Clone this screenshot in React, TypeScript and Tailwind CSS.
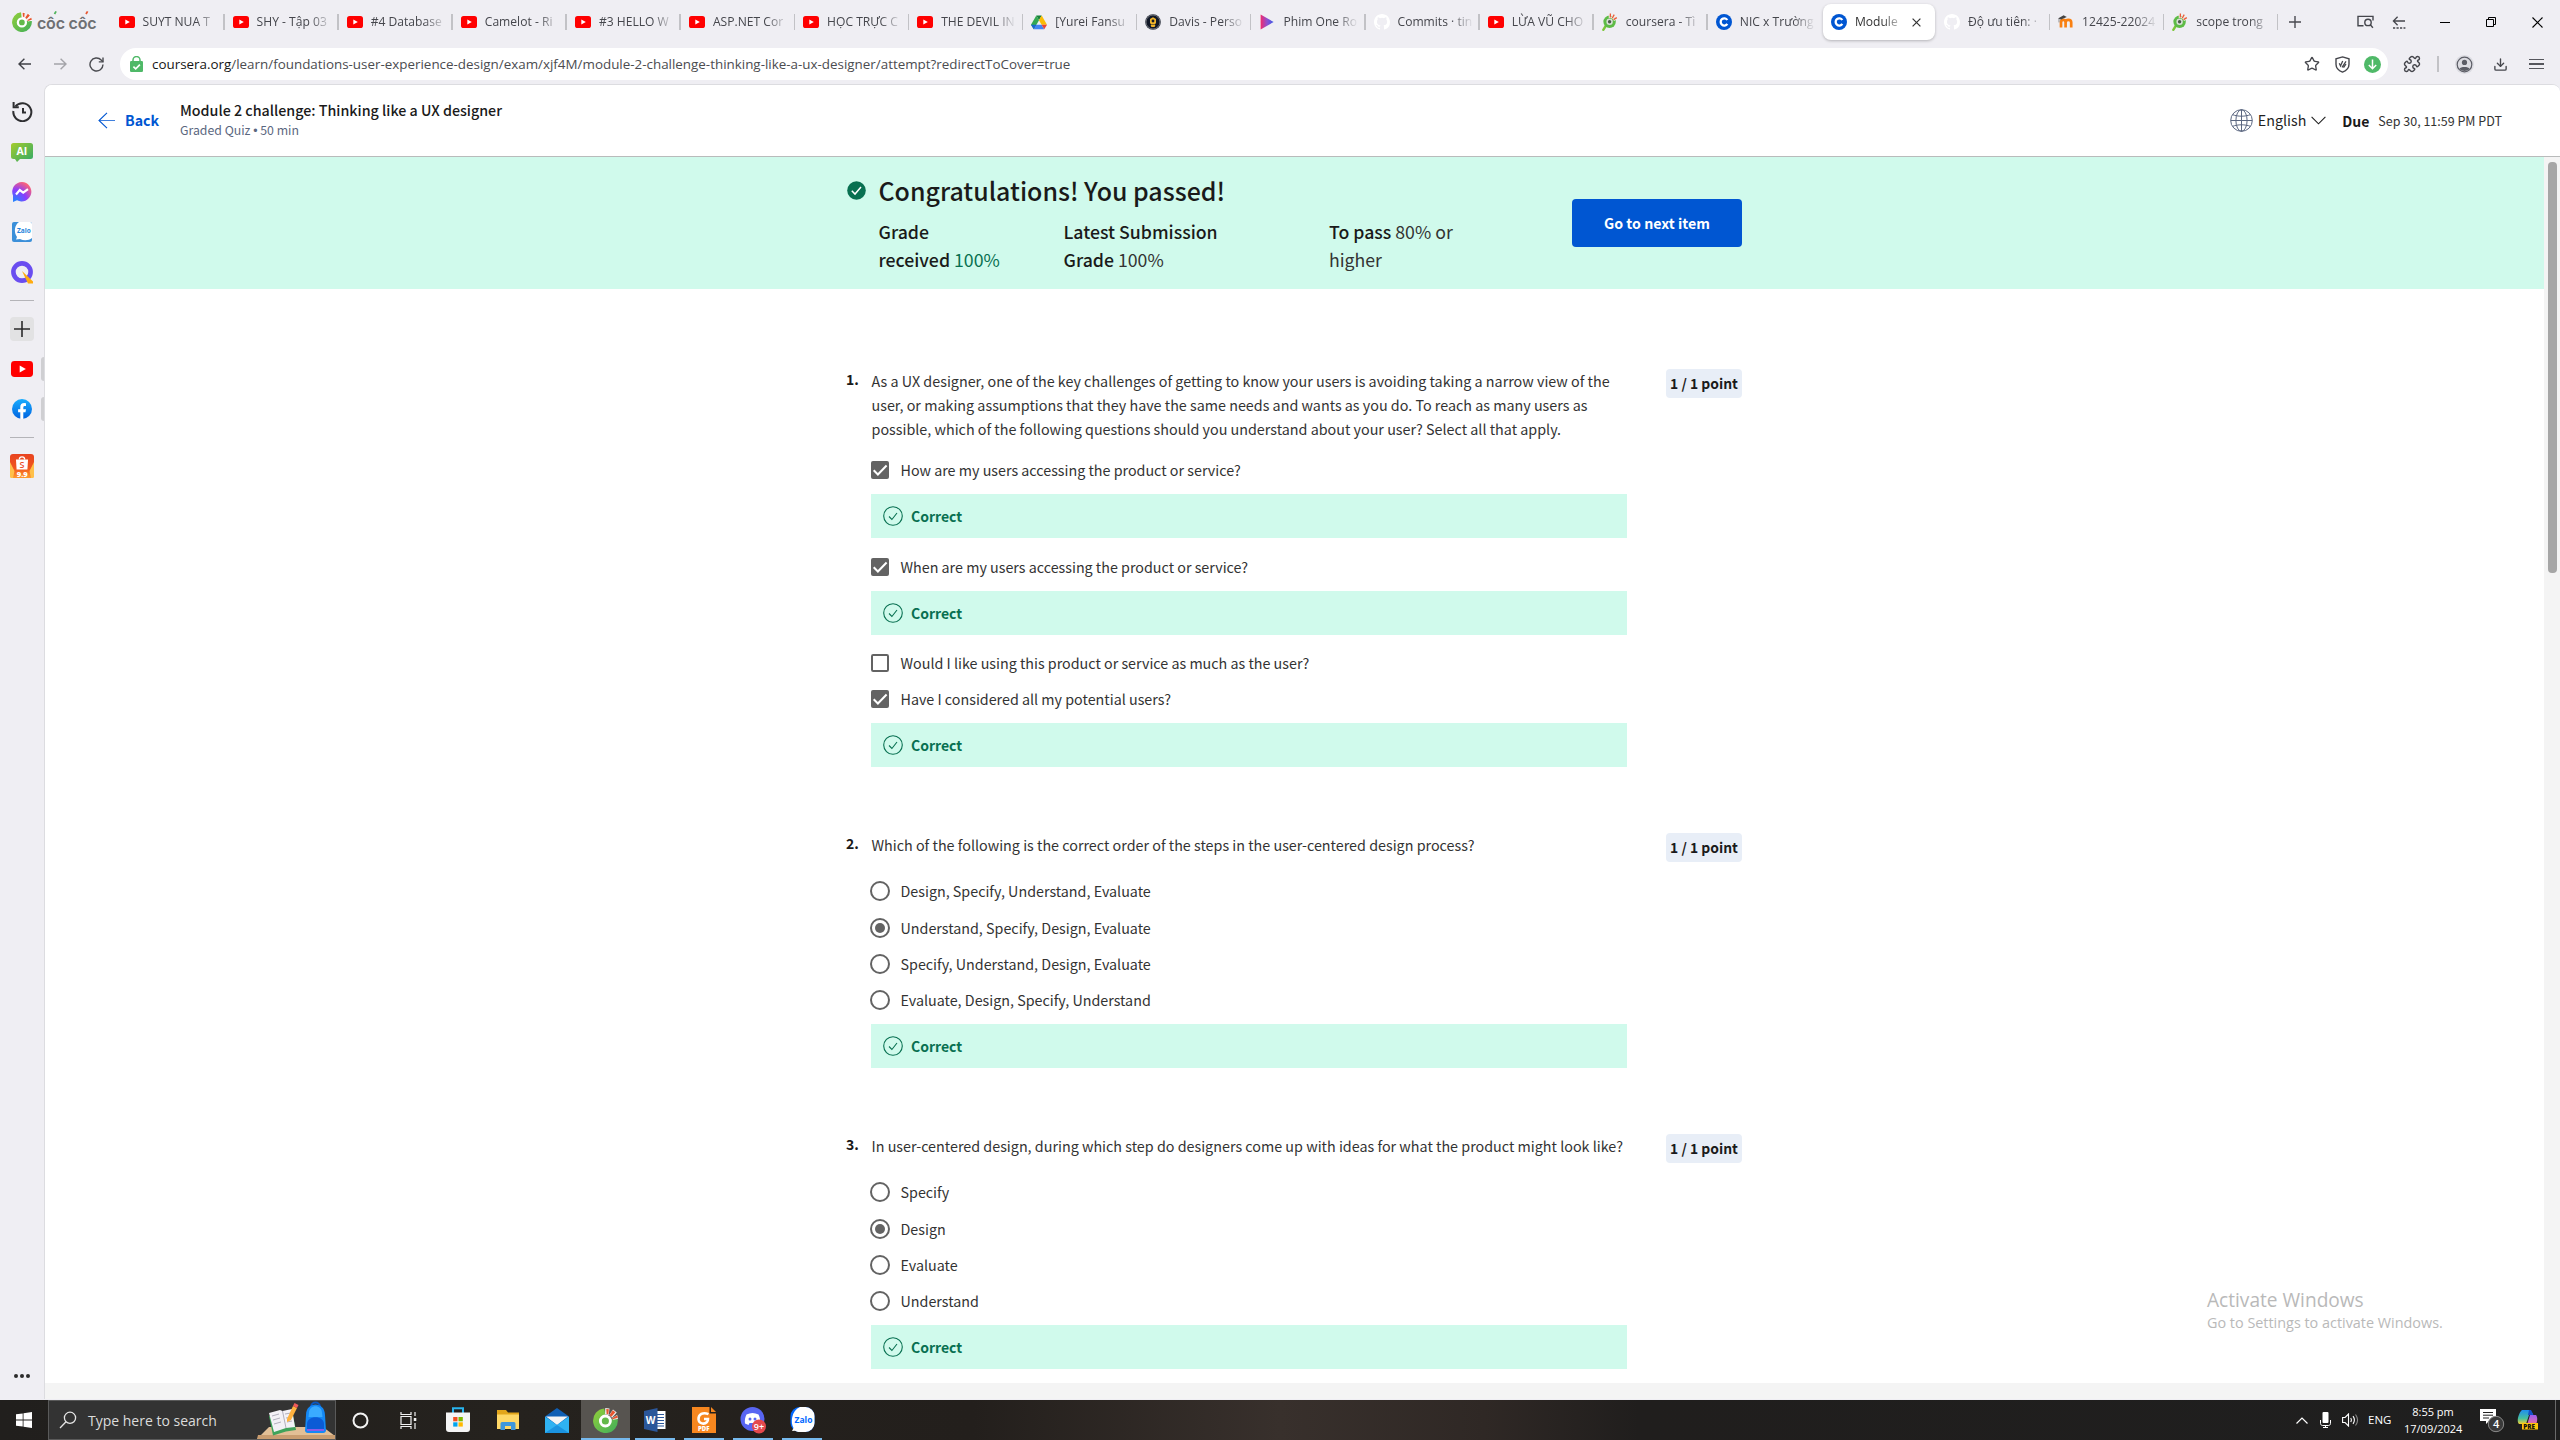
import React from 'react';
import { Download, Puzzle, Star } from 'lucide-react';

const segoe = 'font-["Open_Sans",sans-serif]';
const source = 'font-["Noto_Sans_CJK_SC",sans-serif]';

/* ---------- brand icons ---------- */

function YouTube({ w = 16, h = 12 }: { w?: number; h?: number }) {
  return (
    <svg width={w} height={h} viewBox="0 0 16 12" className="shrink-0" preserveAspectRatio="none">
      <rect width="16" height="12" rx="2.6" fill="#f00" />
      <path d="M6.3 3.4v5.2L10.8 6z" fill="#fff" />
    </svg>
  );
}

function CocCocMark({ size = 20 }: { size?: number }) {
  return (
    <svg width={size} height={size} viewBox="0 0 20 20" className="shrink-0">
      <defs>
        <linearGradient id="ccg" x1="0" y1="0" x2="1" y2="1">
          <stop offset="0" stopColor="#93cf3a" />
          <stop offset="1" stopColor="#3fae5a" />
        </linearGradient>
      </defs>
      <path d="M9 .3A9.900 9.900 0 1 0 19.800 9L14 9 10 6z" fill="url(#ccg)" />
      <circle cx="9.900" cy="10.400" r="4" fill="#63b94a" stroke="#fff" strokeWidth="2.300" />
      <path d="M9.600 5 9.800 0l3.400.3-.6 5.200zM13 5.600 16 1.200l3 2.400-3.800 4.200zM15.500 8l3.800-2.600.7 3.400-4 .6z" fill="#fff" fillOpacity=".9" />
      <path d="M10.900 4.800 10.600.7l2.100.2-.4 4zM13.200 5.800 15.800 1.700l2.100 1.700-3.200 3.600zM15.300 8.100l4-2.300.5 1.900-4 1.300z" fill="#e8552f" />
    </svg>
  );
}

function CocCocSearch() {
  return (
    <svg width="16" height="18" viewBox="0 0 16 18" className="shrink-0">
      <path d="M1.300 16.800 4 12.500" stroke="#7cc63a" strokeWidth="2.400" strokeLinecap="round" />
      <circle cx="7.600" cy="8.800" r="6.200" fill="#5dbb46" />
      <circle cx="7.600" cy="8.800" r="3.200" fill="#d9dfd8" />
      <circle cx="7.600" cy="8.800" r="1.700" fill="#4d5a4b" />
      <path d="m8 5 .2-4.400M10 5.600 12.400 1.600M11.400 7 15 4.600" stroke="#f0efe9" strokeWidth="2.600" />
      <path d="m8.300 4.600.1-4M10.200 5.200 12.200 1.600M11.600 6.600 14.800 4.600" stroke="#ea5b3a" strokeWidth="1.300" />
    </svg>
  );
}

function Drive() {
  return (
    <svg width="16" height="15" viewBox="0 0 16 15" className="shrink-0">
      <path d="M5.300.6h5.400L8 5.200z" fill="#188038" />
      <path d="M5.300.6 8 5.200 2.800 14.200 0 9.800z" fill="#34a853" />
      <path d="M10.700.6 16 9.800h-5.400L8 5.200z" fill="#fbbc04" />
      <path d="M5.400 9.800h5.200l2.600 4.400H2.800z" fill="#4285f4" />
      <path d="M10.600 9.800H16l-2.800 4.400z" fill="#ea4335" />
      <path d="M0 9.800h5.400l-2.600 4.400z" fill="#1967d2" />
    </svg>
  );
}

function Davis() {
  return (
    <svg width="16" height="16" viewBox="0 0 16 16" className="shrink-0">
      <circle cx="8" cy="8" r="7.800" fill="#111827" />
      <circle cx="8" cy="8" r="7" fill="none" stroke="#cfcfcf" strokeWidth=".5" />
      <path d="M8 3.200 11 5v4L9.800 10.400h-3.600L5 9V5z" fill="#f0b429" />
      <path d="M5.600 11h4.800l-.8 2H6.400z" fill="#f0b429" />
      <circle cx="8" cy="7" r="1.400" fill="#111827" />
    </svg>
  );
}

function PlayTriangle() {
  return (
    <svg width="16" height="16" viewBox="0 0 16 16" className="shrink-0">
      <defs>
        <linearGradient id="ptg" x1="0" x2="1">
          <stop offset="0" stopColor="#f2296b" />
          <stop offset=".5" stopColor="#8f4fd0" />
          <stop offset="1" stopColor="#3a5be8" />
        </linearGradient>
      </defs>
      <path d="M1.600.6 14.600 8 1.600 15.400z" fill="url(#ptg)" />
    </svg>
  );
}

function GitHub() {
  return (
    <svg width="16" height="16" viewBox="0 0 16 16" className="shrink-0" fill="#fff">
      <path d="M8 0C3.58 0 0 3.58 0 8c0 3.54 2.29 6.53 5.47 7.59.4.07.55-.17.55-.38v-1.49c-2.01.37-2.53-.49-2.69-.94-.09-.23-.48-.94-.82-1.13-.28-.15-.68-.52-.01-.53.63-.01 1.08.58 1.23.82.72 1.21 1.87.87 2.33.66.07-.52.28-.87.51-1.07-1.78-.2-3.64-.89-3.64-3.95 0-.87.31-1.59.82-2.15-.08-.2-.36-1.02.08-2.12 0 0 .67-.21 2.2.82a7.4 7.4 0 0 1 4 0c1.53-1.04 2.2-.82 2.2-.82.44 1.1.16 1.92.08 2.12.51.56.82 1.27.82 2.15 0 3.07-1.87 3.75-3.65 3.95.29.25.54.73.54 1.48v2.2c0 .21.15.46.55.38A8.01 8.01 0 0 0 16 8c0-4.42-3.58-8-8-8z" />
    </svg>
  );
}

function Coursera() {
  return (
    <svg width="16" height="16" viewBox="0 0 16 16" className="shrink-0">
      <circle cx="8" cy="8" r="8" fill="#0056d2" />
      <path d="M11.300 9.900A3.600 3.600 0 1 1 11.300 6" fill="none" stroke="#fff" strokeWidth="2.300" />
    </svg>
  );
}

function Moodle() {
  return (
    <svg width="16" height="16" viewBox="0 0 16 16" className="shrink-0">
      <path d="M3 13.500V8.400c0-3.400 4.600-3.400 4.600 0v5.100M7.600 8.400c0-3.400 5.600-3.400 5.600 0v5.100" fill="none" stroke="#f98012" strokeWidth="2.700" />
      <path d="M0 4.400 5.600 1.200 8.800 3 3 5.600z" fill="#444" />
      <path d="M1 5v3.400" stroke="#666" strokeWidth=".7" />
    </svg>
  );
}

/* ---------- tab strip ---------- */

type Tab = { icon: React.ReactNode; title: string; active?: boolean; noSep?: boolean };

const tabs: Tab[] = [
  { icon: <YouTube />, title: 'SUYT NUA T' },
  { icon: <YouTube />, title: 'SHY - Tập 03' },
  { icon: <YouTube />, title: '#4 Database' },
  { icon: <YouTube />, title: 'Camelot - Ri' },
  { icon: <YouTube />, title: '#3 HELLO W' },
  { icon: <YouTube />, title: 'ASP.NET Cor' },
  { icon: <YouTube />, title: 'HỌC TRỰC C' },
  { icon: <YouTube />, title: 'THE DEVIL IN' },
  { icon: <Drive />, title: '[Yurei Fansu' },
  { icon: <Davis />, title: 'Davis - Perso' },
  { icon: <PlayTriangle />, title: 'Phim One Ro' },
  { icon: <GitHub />, title: 'Commits · tin' },
  { icon: <YouTube />, title: 'LỪA VŨ CHO' },
  { icon: <CocCocSearch />, title: 'coursera - Tì' },
  { icon: <Coursera />, title: 'NIC x Trường', noSep: true },
  { icon: <Coursera />, title: 'Module', active: true, noSep: true },
  { icon: <GitHub />, title: 'Độ ưu tiên: ·' },
  { icon: <Moodle />, title: '12425-22024' },
  { icon: <CocCocSearch />, title: 'scope trong' },
];

function TabItem({ tab }: { tab: Tab }) {
  if (tab.active) {
    return (
      <div className="flex w-[114.1px] shrink-0 items-center pl-[1px] pr-[1.5px]">
        <div className="flex h-9 w-full items-center rounded-lg bg-white pl-2 shadow-[0_1px_3px_rgba(0,0,0,0.25)]">
          {tab.icon}
          <span className="ml-2 w-[46px] whitespace-nowrap text-[12.1px] text-[#333] [mask-image:linear-gradient(to_right,#000_60%,transparent_110%)]">{tab.title}</span>
          <svg width="9" height="9" viewBox="0 0 9 9" className="ml-[11px]"><path d="m.6.6 7.800 7.800M8.400.6.6 8.400" stroke="#333" strokeWidth="1.200" /></svg>
        </div>
      </div>
    );
  }
  return (
    <div className="flex w-[114.1px] shrink-0 items-center pl-2">
      {tab.icon}
      <span className="ml-2 w-[74px] whitespace-nowrap text-[12.1px] text-[#45464c] [mask-image:linear-gradient(to_right,#000_72%,transparent_102%)]">{tab.title}</span>
      {!tab.noSep && <span className="ml-auto h-4 w-[1.5px] bg-[#c2c2c6]" />}
    </div>
  );
}

function TabStrip() {
  return (
    <div className={`flex h-11 items-stretch ${segoe}`}>
      <div className="flex w-[110.5px] shrink-0 items-center pl-3">
        <CocCocMark size={20} />
        <span className="relative ml-[5px] mt-px whitespace-nowrap text-[16px] font-semibold leading-5 tracking-[-0.2px] text-[#6e7073] font-[Inter,sans-serif]">
          côc côc
          <svg width="60" height="8" viewBox="0 0 60 8" className="absolute -top-[3px] left-0">
            <path d="m17.500 4 1.600-2.600" stroke="#4db35a" strokeWidth="1.800" />
            <path d="m49 4 1.600-2.600" stroke="#e8552f" strokeWidth="1.800" />
          </svg>
        </span>
      </div>
      {tabs.map((t, i) => <TabItem key={i} tab={t} />)}
      <div className="flex w-[34px] items-center justify-center">
        <svg width="12" height="12" viewBox="0 0 12 12"><path d="M6 0v12M0 6h12" stroke="#4a4a50" strokeWidth="1.400" /></svg>
      </div>
      <div className="ml-auto flex items-center">
        <div className="flex w-[34px] justify-center">
          <svg width="17" height="14" viewBox="0 0 17 14" fill="none" stroke="#45464c" strokeWidth="1.400">
            <path d="M6.500 10.800H1V1.400h15v4.200" /><circle cx="11" cy="7.400" r="3.200" /><path d="m13.300 9.700 2.600 3" />
          </svg>
        </div>
        <div className="mr-1.5 flex w-[34px] justify-center">
          <svg width="14" height="13" viewBox="0 0 14 13" fill="none" stroke="#45464c" strokeWidth="1.300">
            <path d="M13 5H1.400M5.600.8 1.400 5l4.200 4.200" /><path d="M1 12h12.400" strokeDasharray="2.200 1.300" />
          </svg>
        </div>
        <div className="flex w-[46px] justify-center"><span className="h-px w-[10px] bg-black" /></div>
        <div className="flex w-[46px] justify-center">
          <svg width="10" height="10" viewBox="0 0 10 10" fill="none" stroke="#000"><path d="M.5 2.500h7v7h-7zM2.500 2.500v-2h7v7h-2" /></svg>
        </div>
        <div className="flex w-[46px] justify-center">
          <svg width="11" height="11" viewBox="0 0 11 11"><path d="m.5.5 10 10M10.500.5l-10 10" stroke="#000" strokeWidth="1.100" /></svg>
        </div>
      </div>
    </div>
  );
}

function AddressRow() {
  return (
    <div className={`flex h-10 items-center ${segoe}`}>
      <div className="flex w-[120px] items-center pl-[6px]">
        <span className="flex w-9 justify-center">
          <svg width="13" height="12" viewBox="0 0 13 12" fill="none" stroke="#3f4046" strokeWidth="1.400"><path d="M13 6H1M6.400.7 1 6l5.400 5.300" /></svg>
        </span>
        <span className="flex w-9 justify-center">
          <svg width="13" height="12" viewBox="0 0 13 12" fill="none" stroke="#a4a4a9" strokeWidth="1.400"><path d="M0 6h12M6.600.7 12 6l-5.400 5.300" /></svg>
        </span>
        <span className="flex w-9 justify-center">
          <svg width="15" height="15" viewBox="0 0 15 15" fill="none" stroke="#4a4b50" strokeWidth="1.400"><path d="M14 7.600A6.500 6.500 0 1 1 12.200 3L14 4.800" /><path d="M14 .6v4.300H9.800" /></svg>
        </span>
      </div>
      <div className="flex h-8 w-[2268px] items-center rounded-full bg-white pl-[10px] pr-[1px]">
        <svg width="13" height="16" viewBox="0 0 13 16"><path d="M3 6V4a3.500 3.500 0 0 1 7 0v2" fill="none" stroke="#4fb968" strokeWidth="1.500" /><rect y="5" width="13" height="11" rx="1.200" fill="#4fb968" /><path d="m3.400 10.600 2.300 2.300 4.200-4.300" stroke="#fff" strokeWidth="1.600" fill="none" /></svg>
        <span className="ml-[9px] whitespace-nowrap text-[13.4px] text-[#4b4c50]"><span className="text-[#161616]">coursera.org</span>/learn/foundations-user-experience-design/exam/xjf4M/module-2-challenge-thinking-like-a-ux-designer/attempt?redirectToCover=true</span>
        <div className="ml-auto flex items-center">
          <span className="flex w-[30px] justify-center"><Star size={16} strokeWidth={2} color="#45464c" /></span>
          <span className="flex w-[30px] justify-center">
            <svg width="15" height="17" viewBox="0 0 15 17" fill="none" stroke="#45464c" strokeWidth="1.400"><path d="M7.500.9 14 2.800v5.400c0 3.800-3 6.500-6.500 7.900C4 14.700 1 12 1 8.200V2.800z" /><path d="m4.300 7.300 1.200 2.600 2.200-5M7 11.300l4-6M8.500 11.600 11 8" strokeWidth="1.300" /></svg>
          </span>
          <span className="flex w-[30px] justify-center">
            <svg width="17" height="17" viewBox="0 0 17 17"><circle cx="8.500" cy="8.500" r="8.500" fill="#4fb968" /><path d="M8.500 3.600v9M4.800 9l3.700 3.700L12.200 9" stroke="#fff" strokeWidth="1.500" fill="none" /></svg>
          </span>
        </div>
      </div>
      <div className="flex w-12 justify-center"><Puzzle size={18} strokeWidth={1.9} color="#45464c" /></div>
      <div className="flex w-1 justify-center"><span className="h-4 w-[1.5px] bg-[#c2c2c6]" /></div>
      <div className="flex w-12 justify-center">
        <svg width="19" height="19" viewBox="0 0 19 19"><circle cx="9.500" cy="9.500" r="9.500" fill="#dcdce2" /><circle cx="9.500" cy="9.500" r="7.300" fill="none" stroke="#5c5d66" strokeWidth="1.200" /><circle cx="9.500" cy="7.400" r="2.600" fill="#5c5d66" /><path d="M4.400 13.900c1-2.600 9.200-2.600 10.200 0a7.300 7.300 0 0 1-10.200 0z" fill="#5c5d66" /></svg>
      </div>
      <div className="flex w-6 justify-center"><Download size={15} strokeWidth={2.2} color="#45464c" /></div>
      <div className="flex w-12 justify-center">
        <div className="flex w-[15px] flex-col gap-[3px]"><span className="h-[1.5px] bg-[#55565c]" /><span className="h-[1.5px] bg-[#55565c]" /><span className="h-[1.5px] bg-[#55565c]" /></div>
      </div>
    </div>
  );
}

/* ---------- sidebar ---------- */

function SideItem({ children, h = 'h-10', open }: { children: React.ReactNode; h?: string; open?: boolean }) {
  return (
    <div className={`relative flex w-full shrink-0 items-center justify-center ${h}`}>
      {children}
      {open && <span className="absolute right-0 top-2 h-6 w-[3px] rounded-l bg-[#cfcfd2]" />}
    </div>
  );
}

function Sidebar() {
  return (
    <div className="flex w-11 shrink-0 flex-col items-center bg-[#efeef3] pt-2">
      <SideItem>
        <svg width="21" height="20" viewBox="0 0 21 20" fill="none" stroke="#2e2e31" strokeWidth="2"><path d="M3.400 4.400A9 9 0 1 1 1.400 9" /><path d="M1.600 0v5.200h5.200" /><path d="M11 6v4.500h3" /></svg>
      </SideItem>
      <SideItem>
        <svg width="22" height="19" viewBox="0 0 22 19"><defs><linearGradient id="aig" x1="0" y1="0" x2="1" y2="1"><stop offset="0" stopColor="#a5cc2c" /><stop offset="1" stopColor="#2fa868" /></linearGradient></defs><path d="M2.500 0h17A2.500 2.500 0 0 1 22 2.500v11a2.500 2.500 0 0 1-2.500 2.500H9l-3 3-2-3H2.500A2.500 2.500 0 0 1 0 13.500v-11A2.500 2.500 0 0 1 2.500 0z" fill="url(#aig)" /><text x="5.500" y="11.800" fontSize="10.500" fontWeight="700" fill="#fff" fontFamily="Open Sans">AI</text></svg>
      </SideItem>
      <SideItem>
        <svg width="20" height="20" viewBox="0 0 20 20"><defs><radialGradient id="msg" cx=".15" cy="1" r="1.100"><stop offset="0" stopColor="#1a8cff" /><stop offset=".55" stopColor="#8a3dff" /><stop offset="1" stopColor="#ff6474" /></radialGradient></defs><path d="M10 0a9.700 9.700 0 1 1-5 18.200L1 20V13.500A9.700 9.700 0 0 1 10 0z" fill="url(#msg)" /><path d="m4 12.500 3.800-4.400 3.400 2.600 4.800-3.600" stroke="#fff" strokeWidth="2.200" fill="none" /></svg>
      </SideItem>
      <SideItem>
        <svg width="20" height="20" viewBox="0 0 20 20"><rect width="20" height="20" rx="2" fill="#3b8fd9" /><path d="M7 0h11a2 2 0 0 1 2 2v14c-3 2.500-8 3-12 1l-4 .6 1-2.500C1.500 10 2.500 3 7 0z" fill="#fff" /><text x="5" y="11" fontSize="6.500" fontWeight="700" fill="#2583da" fontFamily="Open Sans">Zalo</text></svg>
      </SideItem>
      <SideItem>
        <svg width="23" height="23" viewBox="0 0 23 23"><circle cx="11" cy="11" r="8.600" fill="none" stroke="#6a4df0" strokeWidth="4.600" /><path d="m11 10 11 10.500v2h-5z" fill="#ffab0f" /></svg>
      </SideItem>
      <SideItem h="h-4"><span className="h-px w-6 bg-[#b4b4b8]" /></SideItem>
      <div className="mt-[9px] flex h-6 w-6 shrink-0 items-center justify-center rounded bg-[#e2e2e3]">
        <svg width="16" height="16" viewBox="0 0 16 16"><path d="M8 0v16M0 8h16" stroke="#2b2b2b" strokeWidth="1.600" /></svg>
      </div>
      <div className="h-2" />
      <SideItem open><YouTube w={22} h={16} /></SideItem>
      <SideItem open>
        <svg width="20" height="20" viewBox="0 0 20 20"><defs><linearGradient id="fbg" x1="0" y1="0" x2="0" y2="1"><stop offset="0" stopColor="#18acfe" /><stop offset="1" stopColor="#0163e0" /></linearGradient></defs><circle cx="10" cy="10" r="10" fill="url(#fbg)" /><path d="M8.300 20v-6.800H6.100V10.200h2.200V8.100c0-2.600 1.300-4 3.900-4l1.800.2V7h-1.200c-1.200 0-1.500.6-1.500 1.500v1.700h2.700l-.5 3h-2.200V20z" fill="#fff" /></svg>
      </SideItem>
      <SideItem h="h-4"><span className="h-px w-6 bg-[#b4b4b8]" /></SideItem>
      <SideItem h="h-[42px]">
        <svg width="24" height="24" viewBox="0 0 24 24"><defs><linearGradient id="shg" x1="0" y1="0" x2="0" y2="1"><stop offset="0" stopColor="#e8431f" /><stop offset=".6" stopColor="#f0571f" /><stop offset="1" stopColor="#ff9a2e" /></linearGradient></defs><rect width="24" height="24" rx="3" fill="url(#shg)" /><path d="M0 8 4.500 17 3 24H1.500A1.500 1.500 0 0 1 0 22.500zM24 8l-4.500 9L21 24h1.500a1.500 1.500 0 0 0 1.500-1.500z" fill="#ffc04a" /><path d="M6 5.500h12l-.6 10H6.600z" fill="#fff" /><path d="M9.300 5.500c0-3.600 5.400-3.600 5.400 0" fill="none" stroke="#fff" strokeWidth="1.300" /><text x="9.400" y="13.800" fontSize="9" fontWeight="600" fill="#ee4d2d" fontFamily="Open Sans">S</text><text x="6.800" y="22.600" fontSize="7.500" fontWeight="800" fill="#fff" fontFamily="Open Sans">9.9</text></svg>
      </SideItem>
      <div className="mb-[22px] mt-auto flex gap-[2px]">
        <span className="h-1 w-1 rounded-full bg-[#2b2b2b]" /><span className="h-1 w-1 rounded-full bg-[#2b2b2b]" /><span className="h-1 w-1 rounded-full bg-[#2b2b2b]" />
      </div>
    </div>
  );
}

/* ---------- page ---------- */

function PageHeader() {
  return (
    <div className="flex h-[72px] shrink-0 border-b border-[#b9bbbb] bg-white pl-[53px]">
      <div className="flex w-[82px] items-center pb-px">
        <svg width="17" height="17" viewBox="0 0 17 17" fill="none" stroke="#0056d2"><path d="M9 .8 1 8.500 9 16.200" strokeWidth="1.100" /><path d="M1 8.500h16" strokeWidth="1" opacity=".75" /></svg>
        <span className="ml-[10px] text-[14.2px] font-bold leading-6 text-[#0056d2]">Back</span>
      </div>
      <div className="pt-[15px]">
        <div className="whitespace-nowrap text-[14.27px] font-medium leading-5 text-[#1a1a1a]">Module 2 challenge: Thinking like a UX designer</div>
        <div className="mt-px whitespace-nowrap text-[12.3px] leading-[18px] text-[#5b6780]">Graded Quiz <span className="font-['Liberation_Sans',sans-serif]">•</span> 50 min</div>
      </div>
      <div className="ml-auto flex items-center pb-px pr-[58px]">
        <svg width="23" height="23" viewBox="0 0 23 23" fill="none" stroke="#5b6780" strokeWidth="1"><circle cx="11.500" cy="11.500" r="10.800" /><ellipse cx="11.500" cy="11.500" rx="5.600" ry="10.800" /><path d="M11.500.7v21.600M.7 11.500h21.600M2.700 5.700c5 2 12.600 2 17.600 0M2.700 17.300c5-2 12.600-2 17.600 0" /></svg>
        <span className="ml-[5px] text-[14.27px] leading-6 text-[#1f1f1f]">English</span>
        <svg width="15" height="9" viewBox="0 0 15 9" className="ml-[5px]"><path d="m.6.8 6.900 7 6.900-7" fill="none" stroke="#1f1f1f" strokeWidth="1.100" /></svg>
        <span className="ml-4 mt-px text-[14px] font-bold leading-6 text-[#1a1a1a]">Due</span>
        <span className="ml-[9px] mt-px text-[12.5px] leading-6 text-[#333]">Sep 30, 11:59 PM PDT</span>
      </div>
    </div>
  );
}

function Banner() {
  return (
    <div className="flex h-[132px] shrink-0 bg-[#d0faec] pl-[801.5px] pt-[15px]">
      <div className="w-8 pt-[9px]">
        <svg width="19" height="19" viewBox="0 0 19 19"><circle cx="9.500" cy="9.500" r="9.300" fill="#087051" /><path d="m4.800 9.800 3.200 3.300 6-7" fill="none" stroke="#fff" strokeWidth="1.500" /></svg>
      </div>
      <div className="w-[693.5px]">
        <div className="text-[24.95px] font-medium leading-9 text-[#1a1a1a]">Congratulations! You passed!</div>
        <div className="mt-[9px] flex text-[17.7px] leading-7 text-[#333]">
          <div className="w-[185px] font-medium text-[#1a1a1a]">Grade<br />received <span className="font-normal text-[#087051]">100%</span></div>
          <div className="w-[265.5px] font-medium text-[#1a1a1a]">Latest Submission<br />Grade <span className="font-normal text-[#333]">100%</span></div>
          <div><span className="font-medium text-[#1a1a1a]">To pass</span> 80% or<br />higher</div>
        </div>
      </div>
      <button className="mt-[27px] h-12 w-[170px] rounded bg-[#0056d2] pt-0.5 text-[14.2px] font-bold text-white">Go to next item</button>
    </div>
  );
}

function Mark({ kind, on }: { kind: 'box' | 'radio'; on?: boolean }) {
  if (kind === 'radio') {
    return (
      <svg width="20" height="20" viewBox="0 0 20 20" className="mr-[10.5px] shrink-0"><circle cx="10" cy="10" r="9" fill="none" stroke="#636363" strokeWidth="2" />{on && <circle cx="10" cy="10" r="5" fill="#636363" />}</svg>
    );
  }
  return (
    <svg width="18" height="18" viewBox="0 0 18 18" className="ml-px mr-[11.5px] shrink-0">
      {on ? (
        <><rect width="18" height="18" rx="2" fill="#636363" /><path d="m2.700 9.300 4.200 4.200L15.600 4.500" fill="none" stroke="#fff" strokeWidth="2" /></>
      ) : (
        <rect x="1" y="1" width="16" height="16" rx="1.200" fill="none" stroke="#636363" strokeWidth="2" />
      )}
    </svg>
  );
}

function Option({ kind, on, h = 'h-9', children }: { kind: 'box' | 'radio'; on?: boolean; h?: string; children: React.ReactNode }) {
  return (
    <div className={`flex items-center text-[14.3px] leading-6 text-[#333] ${h}`}>
      <Mark kind={kind} on={on} />
      {children}
    </div>
  );
}

function Correct({ className = '' }: { className?: string }) {
  return (
    <div className={`ml-px mt-1.5 flex h-11 w-[756px] items-center bg-[#d0faec] pl-3 text-[#087051] ${className}`}>
      <svg width="20" height="20" viewBox="0 0 20 20" fill="none" stroke="#087051" strokeWidth="1.100"><circle cx="10" cy="10" r="9.300" /><path d="m6 10.500 2.900 3L14 7" /></svg>
      <span className="ml-2 text-[14px] font-bold leading-6">Correct</span>
    </div>
  );
}

function Question({ n, text, gap, children }: { n: number; text: React.ReactNode; gap: string; children: React.ReactNode }) {
  return (
    <div className="flex pl-[801px]">
      <div className="-mt-0.5 w-6 text-[14px] font-bold leading-6 text-[#1a1a1a]">{n}.</div>
      <div className="w-[796px]">
        <div className="whitespace-nowrap pl-[1.5px] text-[14.33px] leading-6 text-[#333]">{text}</div>
        <div className={gap}>{children}</div>
      </div>
      <div className="flex h-[29px] w-[76px] items-center justify-center rounded bg-[#e8eef7] text-[13.9px] font-bold text-[#1a1a1a]">1 / 1 point</div>
    </div>
  );
}

function QuizPage() {
  return (
    <div className={`flex h-[1315px] w-[2516px] shrink-0 flex-col overflow-hidden rounded-t-lg border-l border-t border-[#dcdce0] bg-white ${source}`}>
      <PageHeader />
      <div className="flex h-[1227px]">
        <div className="flex w-[2499px] shrink-0 flex-col bg-white">
          <Banner />
          <div className="flex flex-col gap-[66px] pt-20">
            <Question
              n={1}
              gap="pt-[11px]"
              text={<>As a UX designer, one of the key challenges of getting to know your users is avoiding taking a narrow view of the<br />user, or making assumptions that they have the same needs and wants as you do. To reach as many users as<br />possible, which of the following questions should you understand about your user? Select all that apply.</>}
            >
              <Option kind="box" on>How are my users accessing the product or service?</Option>
              <Correct className="mb-[11px]" />
              <Option kind="box" on>When are my users accessing the product or service?</Option>
              <Correct className="mb-[10px]" />
              <Option kind="box">Would I like using this product or service as much as the user?</Option>
              <Option kind="box" on>Have I considered all my potential users?</Option>
              <Correct />
            </Question>
            <Question n={2} gap="pt-4" text="Which of the following is the correct order of the steps in the user-centered design process?">
              <Option kind="radio" h="mb-px h-9">Design, Specify, Understand, Evaluate</Option>
              <Option kind="radio" on>Understand, Specify, Design, Evaluate</Option>
              <Option kind="radio">Specify, Understand, Design, Evaluate</Option>
              <Option kind="radio">Evaluate, Design, Specify, Understand</Option>
              <Correct />
            </Question>
            <Question n={3} gap="pt-4" text="In user-centered design, during which step do designers come up with ideas for what the product might look like?">
              <Option kind="radio" h="mb-px h-9">Specify</Option>
              <Option kind="radio" on>Design</Option>
              <Option kind="radio">Evaluate</Option>
              <Option kind="radio">Understand</Option>
              <Correct />
            </Question>
          </div>
        </div>
        <div className="w-4 bg-[#f4f4f4] pl-1 pt-[5px]"><div className="h-[411px] w-[9px] rounded-sm bg-[#a6a6a6]" /></div>
      </div>
      <div className="h-4 shrink-0 bg-[#f4f4f4]" />
    </div>
  );
}

/* ---------- taskbar ---------- */

function TaskButton({ children, running, active }: { children: React.ReactNode; running?: boolean; active?: boolean }) {
  return (
    <div className={`flex h-10 w-[49.1px] shrink-0 flex-col items-center justify-between pt-2 ${active ? 'bg-[#575450]' : ''}`}>
      <div className="flex h-6 items-center justify-center">{children}</div>
      {running && <div className={active ? 'h-0.5 w-full bg-[#76b9ed]' : 'h-0.5 w-10 bg-[#76b9ed]'} />}
    </div>
  );
}

function Taskbar() {
  return (
    <div className={`flex h-10 items-center bg-[linear-gradient(90deg,#211f1d_0%,#25221e_20%,#231f1c_38%,#38302c_50%,#2f2825_58%,#201e1d_64%,#1f1f1f_100%)] text-white ${segoe}`}>
      <div className="flex w-12 justify-center">
        <svg width="16" height="16" viewBox="0 0 16 16" fill="#fff"><path d="M0 2.300 6.700 1.400v6.200H0zM7.500 1.300 16 0v7.600H7.500zM0 8.400h6.700v6.200L0 13.700zM7.500 8.400H16V16l-8.500-1.300z" /></svg>
      </div>
      <div className="flex h-10 w-72 items-center border border-[#5a5a5a] bg-[#333] pl-[10px]">
        <svg width="18" height="18" viewBox="0 0 18 18" fill="none" stroke="#e6e6e6" strokeWidth="1.300"><circle cx="11" cy="6.800" r="5.600" /><path d="M7 10.800 1 17" /></svg>
        <span className="ml-[11px] text-[14px] text-[#dcdcdc]">Type here to search</span>
        <svg width="78" height="38" viewBox="0 0 78 38" className="ml-auto shrink-0">
          <path d="M0 38 12 26l54 0 12 9v3z" fill="#e2bf96" />
          <path d="M0 38 1 34h77v4z" fill="#c99d70" />
          <path d="m12 15 11-3.500 3-1 9-.5 4 19-10 1.500-13 4z" fill="#3fa35a" />
          <path d="m12 12 11-3 2.500 1L35 8l3 18-9 1-12 4z" fill="#f3f1f6" />
          <path d="m25.500 10 3.500 17M15 15l7-2M16 19l7-2M17 23l7-2M28 13l6-1M29 17l6-1M30 21l5-1" stroke="#a9a7b5" strokeWidth=".9" fill="none" />
          <path d="m30 18 6-13 4 2-6 12-4 2z" fill="#ffb23e" /><path d="m36 5 1.500-3 4 2L40 7z" fill="#f05a5a" />
          <path d="M54 6c0-6 9-6 9 0" fill="none" stroke="#0b57c0" strokeWidth="2" />
          <path d="M49 14C49 0 68 0 68 14l1 16a3 3 0 0 1-3 2H51a3 3 0 0 1-3-2z" fill="#1488f5" />
          <path d="M52 12C52 3 65 3 65 12l.5 4h-14z" fill="#3aabff" />
          <path d="M50 23c0-9 17-9 17 0v7H50z" fill="#0b5bd6" /><path d="M50 29h17" stroke="#b35cf0" strokeWidth="1.500" />
        </svg>
      </div>
      <div className="flex w-12 justify-center"><svg width="17" height="17" viewBox="0 0 17 17"><circle cx="8.500" cy="8.500" r="7" fill="none" stroke="#f2f2f2" strokeWidth="2" /></svg></div>
      <div className="mr-[1.9px] flex w-12 justify-center">
        <svg width="17" height="17" viewBox="0 0 17 17" fill="none" stroke="#f2f2f2" strokeWidth="1.200"><path d="M1 4.500h10v8H1zM1 0v2.500h10V0M1 17v-2.500h10V17M15 0v4M15 11v6" /><rect x="13.800" y="6" width="2.500" height="3" fill="#f2f2f2" stroke="none" /></svg>
      </div>
      <TaskButton>
        <svg width="24" height="26" viewBox="0 0 24 26"><path d="M7 7V1.300h10V7" fill="none" stroke="#28b4ee" strokeWidth="2" /><path d="M0 5.500h24V22a3 3 0 0 1-3 3H3a3 3 0 0 1-3-3z" fill="#f5f5f5" /><path d="M7.200 10h4.300v4.300H7.200z" fill="#f25022" /><path d="M12.500 10h4.300v4.300h-4.300z" fill="#7fba00" /><path d="M7.200 15.300h4.300v4.300H7.200z" fill="#00a4ef" /><path d="M12.500 15.300h4.300v4.300h-4.300z" fill="#ffb900" /></svg>
      </TaskButton>
      <TaskButton>
        <svg width="22" height="20" viewBox="0 0 22 20"><path d="M0 0h9l2 2.500h11V18H0z" fill="#e2a51b" /><path d="M0 4.500h22V19H0z" fill="#ffd867" /><path d="M3.500 20v-6.500A1.500 1.500 0 0 1 5 12h12a1.500 1.500 0 0 1 1.500 1.500V20H14v-4H8v4z" fill="#3f97dc" /></svg>
      </TaskButton>
      <TaskButton>
        <svg width="24" height="25" viewBox="0 0 24 25"><path d="m0 8.500 12-8.500 12 8.500V25H0z" fill="#0f5fb4" /><path d="M1 8.500h22L12 17z" fill="#f4f4f4" /><path d="M0 8.500 12 17 24 8.500V25H0z" fill="#2fb2f2" /><path d="M0 25 12 17l12 8z" fill="#1b93e0" /></svg>
      </TaskButton>
      <TaskButton running active><CocCocMark size={25} /></TaskButton>
      <TaskButton running>
        <svg width="22" height="24" viewBox="0 0 22 24"><path d="M11 3h10.500v18H11z" fill="#fff" /><path d="M13 6.500h7M13 9.500h7M13 12.500h7M13 15.500h7M13 18h7" stroke="#2b579a" strokeWidth="1.200" /><path d="M0 3 13.500 0v24L0 21z" fill="#2b579a" /><text x="1.800" y="16" fontSize="10" fontWeight="700" fill="#fff" fontFamily="Open Sans">W</text></svg>
      </TaskButton>
      <TaskButton running>
        <svg width="24" height="26" viewBox="0 0 24 26"><path d="M0 0h17.500v6.500H24V26H0z" fill="#f7871f" /><path d="M19 0v5h5z" fill="#f7871f" /><path d="M16.500 7.200c-5.500-2.700-10.300.3-10 5.300.4 4 5.500 5.500 8.500 2.500.8-.8 1-2 1-3h-4" stroke="#fff" strokeWidth="2.500" fill="none" /><text x="6" y="24" fontSize="6" fontWeight="800" fill="#fff" fontFamily="Open Sans">PDF</text></svg>
      </TaskButton>
      <TaskButton running>
        <svg width="26" height="28" viewBox="0 0 26 28"><circle cx="12.500" cy="13" r="12" fill="#5865f2" /><path d="M6.500 8.500c4-2 8-2 12 0 1.500 3 2 6 1.500 9l-3.500 1.500-1-2h-6l-1 2L5 17.500c-.5-3 0-6 1.500-9z" fill="#fff" /><circle cx="10" cy="13" r="1.500" fill="#5865f2" /><circle cx="15" cy="13" r="1.500" fill="#5865f2" /><circle cx="19" cy="20.500" r="7" fill="#e5484d" /><text x="13.800" y="24" fontSize="9" fontWeight="600" fill="#fff" fontFamily="Open Sans">9+</text></svg>
      </TaskButton>
      <TaskButton running>
        <svg width="25" height="26" viewBox="0 0 25 26"><rect x=".5" y="0" width="24" height="25" rx="9" fill="#0068ff" /><path d="M10 0h5.500a9 9 0 0 1 9 9v7a9 9 0 0 1-9 9H10c-2 0-3.500-.5-5-1.300L2 24l1.500-3C.5 16 1 4 10 0z" fill="#fff" /><text x="4.500" y="15.500" fontSize="8.500" fontWeight="700" fill="#0068ff" fontFamily="Open Sans">Zalo</text></svg>
      </TaskButton>

      <div className="ml-auto flex h-10 items-center">
        <svg width="12" height="7" viewBox="0 0 12 7"><path d="m.5 6.500 5.500-5.500 5.500 5.500" fill="none" stroke="#fff" strokeWidth="1.200" /></svg>
        <svg width="11" height="16" viewBox="0 0 11 16" className="ml-3"><rect x="2.500" y="0" width="6" height="11" rx="1" fill="#fff" /><path d="M.5 8v3.500c0 1.200 1 2 2 2h6c1 0 2-.8 2-2V8M5.500 13v2.500M3 15.500h5" fill="none" stroke="#fff" /></svg>
        <svg width="17" height="14" viewBox="0 0 17 14" className="ml-[11px]" fill="none" stroke="#fff" strokeWidth="1.100"><path d="M.6 4.500h2.500L6.500 1v12L3.100 9.500H.6zM8.700 5c.8 1.200.8 2.800 0 4M11 3.200c1.700 2.300 1.700 5.300 0 7.600" /><path d="M13.500 1.500c2.500 3.300 2.500 7.700 0 11" stroke="#8a8a8a" /></svg>
        <span className="ml-[9.5px] w-[23px] whitespace-nowrap text-[11.5px]">ENG</span>
        <div className="ml-[13px] w-[58px] whitespace-nowrap text-center text-[11px] leading-[17px] -mt-px">8:55 pm<br />17/09/2024</div>
        <svg width="25" height="25" viewBox="0 0 25 25" className="ml-[18px]"><path d="M0 1h16v12H9l-3 3v-3H0z" fill="#fff" /><path d="M3 4.500h10M3 7.200h10M3 10h6" stroke="#222" strokeWidth="1" /><circle cx="16" cy="16" r="7.700" fill="#3a3a3a" stroke="#8a8a8a" /><text x="12.900" y="20" fontSize="11" fontWeight="600" fill="#fff" fontFamily="Open Sans">4</text></svg>
        <svg width="21" height="20" viewBox="0 0 21 20" className="ml-3">
          <defs><linearGradient id="cpa" x1="0" y1="0" x2="0" y2="1"><stop offset="0" stopColor="#1f8df0" /><stop offset=".6" stopColor="#45c0a0" /><stop offset="1" stopColor="#f4cf32" /></linearGradient><linearGradient id="cpb" x1="0" y1="0" x2="0" y2="1"><stop offset="0" stopColor="#9a5cf0" /><stop offset="1" stopColor="#f0709a" /></linearGradient></defs>
          <path d="M5 0h8l3 4-4 1-3 9H2c-3-2 0-12 3-14z" fill="url(#cpa)" /><path d="M12 0h2l2.500 5H11z" fill="#1450c8" /><path d="M13 5h6c2 2 1.500 8-1 10h-8z" fill="url(#cpb)" />
          <rect x="5" y="13" width="16" height="6.500" fill="#ffc60b" /><text x="6.200" y="18.600" fontSize="6.300" fontWeight="800" fill="#111" fontFamily="Open Sans">PRE</text>
        </svg>
        <span className="ml-[17px] mr-1 h-10 w-px bg-[#6a6a6a]" />
      </div>
    </div>
  );
}

export default function App() {
  return (
    <div className="relative h-[1440px] w-[2560px] overflow-hidden bg-[#efeef3]">
      <TabStrip />
      <AddressRow />
      <div className="flex h-[1316px]">
        <Sidebar />
        <QuizPage />
      </div>
      <Taskbar />
      <div className={`pointer-events-none absolute left-[2207px] top-[1286px] text-[#b9b9b9] ${segoe}`}>
        <div className="whitespace-nowrap text-[19.1px] leading-7">Activate Windows</div>
        <div className="whitespace-nowrap text-[14.4px] leading-[18px]">Go to Settings to activate Windows.</div>
      </div>
    </div>
  );
}
